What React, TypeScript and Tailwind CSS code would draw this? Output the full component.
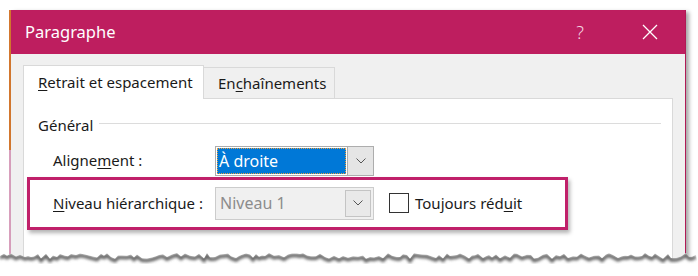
import React from 'react';

const font = { fontFamily: '"Noto Sans", "Open Sans", sans-serif' };

function Chevron() {
  return (
    <svg width="10" height="6" viewBox="0 0 10 6" aria-hidden="true">
      <path d="M0.5 0.5 L5 5 L9.5 0.5" fill="none" stroke="#555" strokeWidth="1" />
    </svg>
  );
}

// jagged "torn paper" edge at the bottom of the screenshot
function TornEdge() {
  const pts: string[] = [];
  let seed = 7;
  const rnd = () => {
    seed = (seed * 9301 + 49297) % 233280;
    return seed / 233280;
  };
  for (let x = 0; x <= 700; x += 3 + Math.floor(rnd() * 3)) {
    pts.push(`${x},${(6 + rnd() * 6).toFixed(1)}`);
  }
  const line = pts.join(' ');
  const poly = `0,30 ${line} 700,30`;
  return (
    <svg className="absolute left-0 top-[247px]" width="698" height="29" aria-hidden="true">
      <defs>
        <filter id="blur" x="-5%" y="-50%" width="110%" height="200%">
          <feGaussianBlur stdDeviation="1.6" />
        </filter>
        <clipPath id="below">
          <polygon points={poly} />
        </clipPath>
      </defs>
      <polygon points={poly} fill="#ffffff" />
      <g clipPath="url(#below)">
        <polyline points={line} transform="translate(0,2)" fill="none" stroke="#5e5e5e" strokeWidth="3.5" filter="url(#blur)" />
      </g>
    </svg>
  );
}

export default function App() {
  return (
    <div className="relative w-[698px] h-[276px] overflow-hidden bg-white text-[#1a1a1a]" style={font}>
      <div className="flex pt-[10px] pl-[9px]">
        {/* window border behind, left side */}
        <div className="flex flex-col w-[2px]">
          <div className="h-[140px] bg-[#d4782f]" />
          <div className="h-[120px] bg-[#d9a0bd]" />
        </div>

        {/* Dialog */}
        <div className="w-[675px] flex flex-col border-r border-[#b01a56] shadow-[3px_2px_4px_rgba(0,0,0,0.35)]">
          {/* Title bar */}
          <div className="h-[44px] bg-[#be1e5f] flex items-center text-white">
            <div className="pl-[14px] text-[16.5px] flex-1">Paragraphe</div>
            <div className="w-[40px] text-[18px] font-light text-center text-[#f3d5e0]">?</div>
            <div className="w-[15px]" />
            <div className="w-[70px] flex justify-center">
              <svg width="16" height="16" viewBox="0 0 16 16" aria-hidden="true">
                <path d="M1 1 L15 15 M15 1 L1 15" stroke="#fff" strokeWidth="1.3" />
              </svg>
            </div>
          </div>

          {/* Body */}
          <div className="bg-[#f0f0f0] pl-[12px] pr-[12px] pt-[11px] h-[220px]">
            {/* Tabs */}
            <div className="flex items-end text-[15px]">
              <div className="h-[34px] w-[181px] bg-white border border-b-0 border-[#d9d9d9] flex items-center pl-[14px] -mb-px relative z-10">
                <span><span className="underline underline-offset-2">R</span>etrait et espacement</span>
              </div>
              <div className="h-[31px] w-[131px] bg-[#f0f0f0] border border-l-0 border-b-0 border-[#d9d9d9] flex items-center pl-[14px]">
                <span>En<span className="underline underline-offset-2">c</span>haînements</span>
              </div>
            </div>

            {/* Panel */}
            <div className="bg-white border border-[#d9d9d9] h-[200px] text-[15px]">
              <div className="flex items-center pl-[14px] pr-[11px] pt-[15px]">
                <span>Général</span>
                <div className="flex-1 ml-[6px] mt-[-3px] h-px bg-[#dcdcdc]" />
              </div>

              {/* Alignement */}
              <div className="flex items-center pl-[29px] mt-[9px] h-[30px]">
                <span className="w-[162px]">Aligne<span className="underline underline-offset-2">m</span>ent :</span>
                <div className="w-[159px] h-[30px] border border-[#adadad] bg-white flex">
                  <div className="flex-1 p-[1px]">
                    <div className="h-full bg-[#0078d7] outline-1 outline-dotted outline-[#e8a040] -outline-offset-1 text-white text-[16px] flex items-center pl-[2px]">
                      À droite
                    </div>
                  </div>
                  <div className="w-[26px] border-l border-[#adadad] bg-[#e5e5e5] flex items-center justify-center">
                    <Chevron />
                  </div>
                </div>
              </div>

              {/* Highlighted row */}
              <div className="ml-[3px] mt-[1px] w-[541px] h-[53px] border-[3px] border-[#c0206a] shadow-[2px_3px_4px_rgba(0,0,0,0.3)] flex items-center pl-[23px]">
                <span className="w-[162px]"><span className="underline underline-offset-2">N</span>iveau hiérarchique :</span>
                <div className="w-[159px] h-[33px] border border-[#cccccc] bg-[#f0f0f0] flex">
                  <div className="flex-1 flex items-center pl-[4px] text-[16px] text-[#8c8c8c]">Niveau 1</div>
                  <div className="w-[26px] m-[2px] border border-[#c4c4c4] bg-[#e9e9e9] flex items-center justify-center">
                    <Chevron />
                  </div>
                </div>
                <div className="ml-[15px] w-[20px] h-[20px] border border-[#333] bg-white" />
                <span className="ml-[6px]">Toujours réd<span className="underline underline-offset-2">u</span>it</span>
              </div>
            </div>
          </div>
        </div>
      </div>
      <TornEdge />
    </div>
  );
}
